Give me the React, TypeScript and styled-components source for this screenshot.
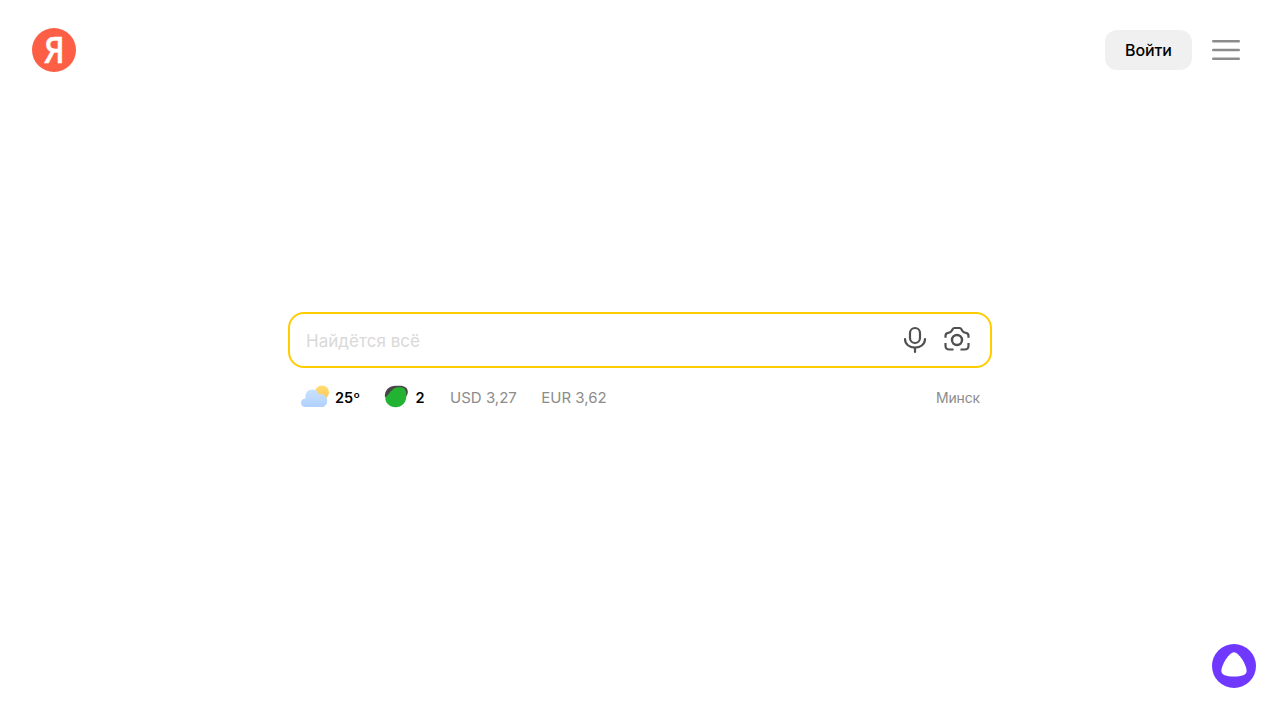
import React from 'react';
import styled, { createGlobalStyle } from 'styled-components';

const GlobalStyle = createGlobalStyle`
  * { box-sizing: border-box; }
  body { margin: 0; background: #fff; font-family: Inter, "Liberation Sans", sans-serif; overflow: hidden; }
  button, input { font: inherit; border: 0; background: none; padding: 0; }
  svg { display: block; flex: none; overflow: visible; }
`;

const Page = styled.div`
  height: 100vh;
  display: flex;
  flex-direction: column;
`;

const Header = styled.header`
  display: flex;
  align-items: center;
  height: 100px;
  padding: 0 40px 0 32px;
`;

const HeaderActions = styled.div`
  display: flex;
  align-items: center;
  gap: 20px;
  margin-left: auto;
`;

const LoginButton = styled.button`
  width: 87px;
  height: 40px;
  border-radius: 12px;
  background: #f0f0f0;
  color: #000;
  font-size: 16px;
  font-weight: 500;
  letter-spacing: -0.1px;
  white-space: nowrap;
`;

const IconButton = styled.button`
  display: block;
`;

const Main = styled.main`
  flex: 1;
  width: 704px;
  margin: 212px auto 0;
`;

const SearchForm = styled.form`
  display: flex;
  align-items: center;
  gap: 14px;
  height: 56px;
  padding: 0 19px 0 16px;
  border: 2px solid #ffcc00;
  border-radius: 16px;
`;

const SearchInput = styled.input`
  flex: 1;
  min-width: 0;
  height: 100%;
  padding-top: 1px;
  outline: none;
  font-size: 17px;
  letter-spacing: 0.04px;
  &::placeholder { color: #d9d9d9; opacity: 1; }
`;

const Informers = styled.div`
  display: flex;
  align-items: center;
  height: 28px;
  margin-top: 16px;
  padding: 0 12px 0 13px;
`;

const Informer = styled.span<{ $strong?: boolean; $gap?: number; $after?: number }>`
  display: flex;
  align-items: center;
  gap: ${({ $gap = 0 }) => $gap}px;
  margin-right: ${({ $after = 0 }) => $after}px;
  color: ${({ $strong }) => ($strong ? '#000' : '#8c8c8c')};
  font-size: ${({ $strong }) => ($strong ? 14.5 : 15)}px;
  font-weight: ${({ $strong }) => ($strong ? 600 : 400)};
  line-height: 20px;
  white-space: nowrap;
`;

const City = styled.span`
  margin-left: auto;
  color: #8c8c8c;
  font-size: 14px;
  letter-spacing: -0.15px;
  line-height: 20px;
`;

const Footer = styled.footer`
  display: flex;
  justify-content: flex-end;
  padding: 0 24px 32px;
`;

const Logo = () => (
  <svg width="44" height="44" viewBox="0 0 44 44">
    <circle cx="22" cy="22" r="22" fill="#fc5f45" />
    <text x="11.9" y="35.3" fontFamily="Open Sans, sans-serif" fontWeight="600" fontSize="36.5" textLength="20.8" lengthAdjust="spacingAndGlyphs" fill="#fff" stroke="#fff" strokeWidth="0.3">Я</text>
  </svg>
);

const MenuIcon = () => (
  <svg width="28" height="28" fill="none" stroke="#8c8c8c" strokeWidth="2.4" strokeLinecap="round">
    <path d="M1.2 5.2h25.6M1.2 14h25.6M1.2 22.8h25.6" />
  </svg>
);

const MicIcon = () => (
  <svg width="28" height="28" fill="none" stroke="#505050" strokeWidth="2.2" strokeLinecap="round">
    <rect x="9" y="2" width="10" height="15" rx="5" />
    <path d="M4 13c0 5.2 4.3 8.6 10 8.6S24 18.2 24 13" />
    <path d="M14 22v4" />
  </svg>
);

const CameraIcon = () => (
  <svg width="28" height="28" fill="none" stroke="#505050" strokeWidth="2.2" strokeLinejoin="round">
    <circle cx="14" cy="14" r="5" strokeWidth="2.4" />
    <path d="M2.5 11.8V10c0-2 .9-3 2.7-3.2 2-.2 2.8-.5 3.5-2C9.6 2.7 10 2 11.6 2h4.8c1.6 0 2 .7 2.9 2.8.7 1.5 1.5 1.8 3.5 2 1.8.2 2.7 1.2 2.7 3.2v1.8M2.5 17v2.5c0 3 .8 4 4 4h4M25.5 17v2.5c0 3-.8 4-4 4h-4" />
  </svg>
);

const WeatherIcon = () => (
  <svg width="28" height="28">
    <defs>
      <linearGradient id="sun" x1="0" y1="0" x2="0" y2="1">
        <stop stopColor="#ffdc72" /><stop offset="1" stopColor="#ffc65d" />
      </linearGradient>
      <linearGradient id="cloud" x1="0" y1="0" x2="0" y2="1">
        <stop stopColor="#c9e1ff" /><stop offset="1" stopColor="#b0d1fc" />
      </linearGradient>
    </defs>
    <circle cx="21" cy="8.5" r="7" fill="url(#sun)" />
    <path d="M4.3 23C1.700 23 0 21.300 0 18.800c0-2.500 1.800-4.300 4.700-4.500C3.700 8.800 7.200 5.600 11.300 5.600c3.300 0 5.800 1.900 6.600 4.600 4.500-.9 8.600 2.300 8.300 6.700-.2 3.600-2.500 6.100-5.700 6.100z" fill="url(#cloud)" />
  </svg>
);

const TrafficIcon = () => (
  <svg width="24" height="28">
    <path d="M.9 13C.4 6 5 1.700 12 1.700h3.500c5.500 0 8.300 2.300 8.300 6.300 0 1.200-.5 2.700-1.300 4L20 13H6z" fill="#4b4446" />
    <path d="M1.300 13.300C5.800 10 7.500 4.700 12.500 3.600c3.500-.8 7.100-.6 8.600 1.800.9 1.500 1.500 4.300 1.300 7C22.100 18.700 17.500 23.200 11.700 23.200 5.600 23.200.9 19 1.300 13.300z" fill="#21b331" />
  </svg>
);

const AliceIcon = () => (
  <svg width="44" height="44">
    <circle cx="22" cy="22" r="22" fill="#7038ff" />
    <path d="M22 8.300c-4.800 0-12.600 12.700-12.600 18.600 0 4 4.800 5.500 12.600 5.500s12.600-1.500 12.600-5.500C34.600 21 26.800 8.300 22 8.300z" fill="#fff" />
  </svg>
);

export default function App() {
  return (
    <Page>
      <GlobalStyle />
      <Header>
        <Logo />
        <HeaderActions>
          <LoginButton>Войти</LoginButton>
          <IconButton aria-label="Меню"><MenuIcon /></IconButton>
        </HeaderActions>
      </Header>
      <Main>
        <SearchForm>
          <SearchInput placeholder="Найдётся всё" />
          <IconButton type="button" aria-label="Голосовой поиск"><MicIcon /></IconButton>
          <IconButton type="button" aria-label="Поиск по картинке"><CameraIcon /></IconButton>
        </SearchForm>
        <Informers>
          <Informer $strong $gap={6} $after={23.5}><WeatherIcon />25º</Informer>
          <Informer $strong $gap={8} $after={25.5}><TrafficIcon />2</Informer>
          <Informer $after={24.5}>USD 3,27</Informer>
          <Informer>EUR 3,62</Informer>
          <City>Минск</City>
        </Informers>
      </Main>
      <Footer>
        <IconButton aria-label="Алиса"><AliceIcon /></IconButton>
      </Footer>
    </Page>
  );
}
